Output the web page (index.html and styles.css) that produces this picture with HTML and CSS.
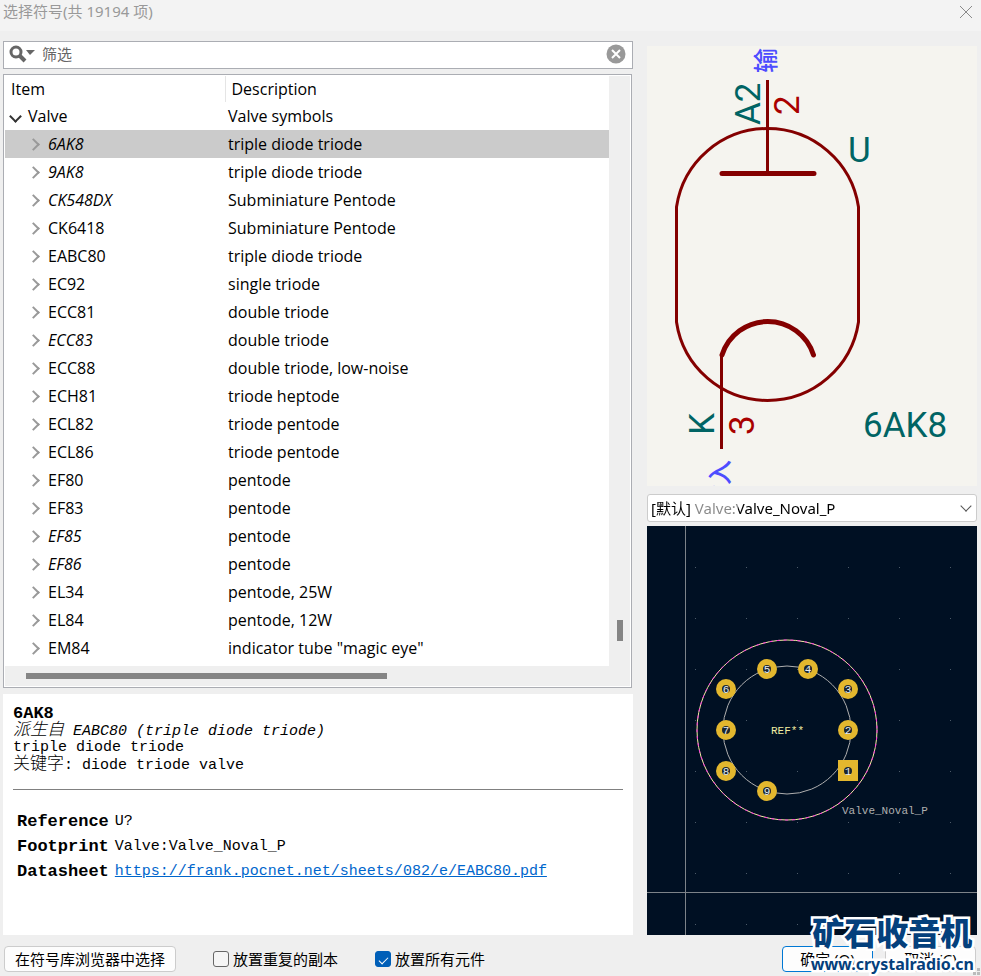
FILE: index.html
```html
<!DOCTYPE html>
<html lang="zh-CN">
<head>
    <meta charset="UTF-8">
    <meta name="viewport" content="width=device-width, initial-scale=1.0">
    <title>选择符号</title>
    <link rel="stylesheet" href="styles.css">
</head>
<body>
    <div class="titlebar">
        <h1>选择符号(共 19194 项)</h1>
        <button class="close" aria-label="关闭">
            <svg width="14" height="14" viewBox="0 0 14 14"><path d="M1 1 L13 13 M13 1 L1 13" stroke="#8a8a8a" fill="none"/></svg>
        </button>
    </div>
    <main class="content">
        <div class="left">
            <div class="search">
                <svg width="28" height="20" viewBox="0 0 28 20">
                    <circle cx="8" cy="8" r="5" fill="none" stroke="#666" stroke-width="3"/>
                    <path d="M11 11 L17 17" stroke="#666" stroke-width="4"/>
                    <path d="M18 6 H27 L22 11 Z" fill="#666"/>
                </svg>
                <input type="text" id="filter" placeholder="筛选" aria-label="筛选">
                <button class="clear" aria-label="清除">
                    <svg width="20" height="20" viewBox="0 0 20 20"><circle cx="10" cy="10" r="9.500" fill="#999"/><path d="M6 6 L14 14 M14 6 L6 14" stroke="#fff" stroke-width="2"/></svg>
                </button>
            </div>
            <div class="tree">
                <table>
                    <thead>
                        <tr><th class="name">Item</th><th>Description</th></tr>
                    </thead>
                    <tbody>
                        <tr class="library"><td><button class="expander open" aria-label="折叠"></button>Valve</td><td>Valve symbols</td></tr>
                        <tr class="selected derived"><td><button class="expander" aria-label="展开"></button>6AK8</td><td>triple diode triode</td></tr>
                        <tr class="derived"><td><button class="expander" aria-label="展开"></button>9AK8</td><td>triple diode triode</td></tr>
                        <tr class="derived"><td><button class="expander" aria-label="展开"></button>CK548DX</td><td>Subminiature Pentode</td></tr>
                        <tr><td><button class="expander" aria-label="展开"></button>CK6418</td><td>Subminiature Pentode</td></tr>
                        <tr><td><button class="expander" aria-label="展开"></button>EABC80</td><td>triple diode triode</td></tr>
                        <tr><td><button class="expander" aria-label="展开"></button>EC92</td><td>single triode</td></tr>
                        <tr><td><button class="expander" aria-label="展开"></button>ECC81</td><td>double triode</td></tr>
                        <tr class="derived"><td><button class="expander" aria-label="展开"></button>ECC83</td><td>double triode</td></tr>
                        <tr><td><button class="expander" aria-label="展开"></button>ECC88</td><td>double triode, low-noise</td></tr>
                        <tr><td><button class="expander" aria-label="展开"></button>ECH81</td><td>triode heptode</td></tr>
                        <tr><td><button class="expander" aria-label="展开"></button>ECL82</td><td>triode pentode</td></tr>
                        <tr><td><button class="expander" aria-label="展开"></button>ECL86</td><td>triode pentode</td></tr>
                        <tr><td><button class="expander" aria-label="展开"></button>EF80</td><td>pentode</td></tr>
                        <tr><td><button class="expander" aria-label="展开"></button>EF83</td><td>pentode</td></tr>
                        <tr class="derived"><td><button class="expander" aria-label="展开"></button>EF85</td><td>pentode</td></tr>
                        <tr class="derived"><td><button class="expander" aria-label="展开"></button>EF86</td><td>pentode</td></tr>
                        <tr><td><button class="expander" aria-label="展开"></button>EL34</td><td>pentode, 25W</td></tr>
                        <tr><td><button class="expander" aria-label="展开"></button>EL84</td><td>pentode, 12W</td></tr>
                        <tr><td><button class="expander" aria-label="展开"></button>EM84</td><td>indicator tube "magic eye"</td></tr>
                    </tbody>
                </table>
                <div class="vscroll"><div class="vthumb"></div></div>
                <div class="hscroll"><div class="hthumb"></div></div>
            </div>
            <section class="details">
                <h2>6AK8</h2>
                <p><em><span class="cjk">派生自</span> EABC80 (triple diode triode)</em></p>
                <p>triple diode triode</p>
                <p><span class="cjk">关键字</span>: diode triode valve</p>
                <hr>
                <table>
                    <tr><th>Reference</th><td>U?</td></tr>
                    <tr><th>Footprint</th><td>Valve:Valve_Noval_P</td></tr>
                    <tr><th>Datasheet</th><td><a href="https://frank.pocnet.net/sheets/082/e/EABC80.pdf">https://frank.pocnet.net/sheets/082/e/EABC80.pdf</a></td></tr>
                </table>
            </section>
        </div>
        <div class="right">
            <svg class="symbol" viewBox="0 0 330 440">
                <g class="outline">
                    <path d="M29.500 276 V161 A92 92 0 0 1 211.500 161 V276 A92 92 0 0 1 29.500 276 Z"/>
                    <path d="M120.500 34 V127 M74.500 309 V403"/>
                    <path class="thick" d="M75 127.500 H167 M75 309 A48 48 0 0 1 166.500 309"/>
                </g>
                <g class="label">
                    <text transform="translate(113 79) rotate(-90)">A2</text>
                    <text transform="translate(67 389) rotate(-90)">K</text>
                    <text x="201" y="116">U</text>
                    <text x="216" y="391">6AK8</text>
                </g>
                <g class="pin">
                    <text transform="translate(152 69) rotate(-90)">2</text>
                    <text transform="translate(107 389) rotate(-90)">3</text>
                </g>
                <g class="type">
                    <text transform="translate(128 27) rotate(-90)">输出</text>
                    <text transform="translate(82 464) rotate(-90)">输入</text>
                </g>
            </svg>
            <div class="select-box">
                <select class="footprint-select" id="footprint" aria-label="封装">
                    <option>[默认] Valve:Valve_Noval_P</option>
                </select>
            </div>
            <svg class="footprint" viewBox="0 0 330 409">
                <defs>
                    <pattern id="dots" x="48" y="41" width="51" height="51" patternUnits="userSpaceOnUse">
                        <rect width="1" height="1" fill="#4c5a68"/>
                    </pattern>
                </defs>
                <rect width="330" height="409" fill="url(#dots)"/>
                <path d="M38.500 0 V409 M0 366.500 H330" stroke="#7d8389"/>
                <circle cx="140" cy="204" r="64" class="fab"/>
                <circle cx="140" cy="204" r="90" class="silk"/>
                <circle cx="140" cy="204" r="90" class="courtyard"/>
                <g class="pads">
                    <circle cx="120" cy="143" r="10"/>
                    <circle cx="161" cy="143" r="10"/>
                    <circle cx="79" cy="163" r="10"/>
                    <circle cx="201" cy="163" r="10"/>
                    <circle cx="79" cy="204" r="10"/>
                    <circle cx="201" cy="204" r="10"/>
                    <circle cx="79" cy="245" r="10"/>
                    <rect x="191" y="234" width="20" height="21"/>
                    <circle cx="120" cy="265" r="10"/>
                </g>
                <g class="holes">
                    <circle cx="120" cy="143" r="4"/>
                    <circle cx="161" cy="143" r="4"/>
                    <circle cx="79" cy="163" r="4"/>
                    <circle cx="201" cy="163" r="4"/>
                    <circle cx="79" cy="204" r="4"/>
                    <circle cx="201" cy="204" r="4"/>
                    <circle cx="79" cy="245" r="4"/>
                    <circle cx="201" cy="245" r="4"/>
                    <circle cx="120" cy="265" r="4"/>
                </g>
                <g class="numbers">
                    <text x="120" y="147">5</text>
                    <text x="161" y="147">4</text>
                    <text x="79" y="167">6</text>
                    <text x="201" y="167">3</text>
                    <text x="79" y="208">7</text>
                    <text x="201" y="208">2</text>
                    <text x="79" y="249">8</text>
                    <text x="201" y="249">1</text>
                    <text x="120" y="269">9</text>
                </g>
                <text x="124" y="208" class="ref">REF**</text>
                <text x="195" y="288" class="value">Valve_Noval_P</text>
            </svg>
        </div>
    </main>
    <footer class="footer">
        <button class="btn browse">在符号库浏览器中选择</button>
        <label class="check"><input type="checkbox"><span>放置重复的副本</span></label>
        <label class="check"><input type="checkbox" checked><span>放置所有元件</span></label>
        <div class="actions">
            <button class="btn ok">确定 (O)</button>
            <button class="btn">取消 (C)</button>
        </div>
        <div class="watermark">
            <strong>矿石收音机</strong>
            <span>www.crystalradio.cn</span>
        </div>
        <svg class="grip" width="8" height="8" viewBox="0 0 8 8"><path d="M4 0 H7 V3 H4 Z M0 4 H3 V7 H0 Z M4 4 H7 V7 H4 Z" fill="#bbb"/></svg>
    </footer>
</body>
</html>
```

FILE: styles.css
```css
* {
    box-sizing: border-box;
}
body {
    margin: 0;
    min-height: 100vh;
    display: flex;
    flex-direction: column;
    background: #efefef;
    color: #000;
    font-family: "Noto Sans", "Noto Sans CJK SC", sans-serif;
    font-size: 15px;
}
button, input, select {
    font: inherit;
    color: inherit;
}
.titlebar {
    display: flex;
    justify-content: space-between;
    align-items: flex-start;
    height: 31px;
    padding: 0 8px 0 3px;
    background: #f3f3f3;
}
.titlebar h1 {
    margin: 0;
    font-size: 15px;
    font-weight: normal;
    line-height: 22px;
    color: #999;
}
.close, .clear {
    display: flex;
    padding: 0;
    border: none;
    background: none;
}
.close {
    margin-top: 5px;
}
.content {
    flex: 1;
    display: grid;
    grid-template-columns: minmax(0, 21fr) minmax(0, 11fr);
    column-gap: 14px;
    padding: 10px 4px 0 3px;
}
.left {
    display: flex;
    flex-direction: column;
}
.right {
    padding-top: 5px;
}

/* filter box */
.search {
    display: flex;
    align-items: center;
    height: 28px;
    padding: 0 6px 2px 4px;
    border: 1px solid #abadb3;
    background: #fff;
}
.search input {
    flex: 1;
    min-width: 0;
    padding: 0 6px;
    border: none;
    outline: none;
    background: none;
}
.search input::placeholder {
    color: #666;
}

/* symbol tree */
.tree {
    display: grid;
    grid-template-columns: minmax(0, 1fr) 21px;
    margin: 5px 1px 0 0;
    padding: 1px;
    border: 1px solid #abadb3;
    background: #fff;
    font-family: "Open Sans", sans-serif;
    font-size: 16px;
}
.tree table {
    width: 100%;
    border-collapse: collapse;
    table-layout: fixed;
    margin-bottom: 4px;
}
.tree th {
    height: 26px;
    padding: 0 6px;
    font-weight: normal;
    text-align: left;
}
.tree .name {
    width: 220px;
    border-right: 1px solid #e5e5e5;
}
.tree td {
    height: 28px;
    padding: 0 3px;
    white-space: nowrap;
}
.tree td:first-child {
    padding-left: 24px;
}
.tree .library td:first-child {
    padding-left: 4px;
}
.tree .derived td:first-child {
    font-style: italic;
}
.tree .selected {
    background: #cbcbcb;
}
.expander {
    width: 12px;
    height: 12px;
    margin-right: 7px;
    padding: 0;
    border: none;
    background: none;
}
.expander::before {
    content: "";
    display: block;
    width: 7px;
    height: 7px;
    border: solid #999;
    border-width: 2px 2px 0 0;
    transform: rotate(45deg);
}
.expander.open::before {
    border-color: #333;
    margin-left: 2px;
    transform: rotate(135deg);
}
.vscroll, .hscroll {
    background: #efefef;
}
.vscroll {
    display: flex;
    flex-direction: column;
    align-items: center;
    justify-content: flex-end;
    padding-bottom: 25px;
}
.vthumb {
    width: 6px;
    height: 21px;
    background: #858585;
}
.hscroll {
    grid-column: span 2;
    height: 20px;
    padding: 7px 21px;
}
.hthumb {
    width: 62%;
    height: 6px;
    background: #858585;
}

/* symbol details */
.details {
    flex: 1;
    margin-top: 6px;
    padding: 11px 10px;
    background: #fff;
    font-family: "Liberation Mono", "Noto Sans CJK SC", monospace;
    line-height: 17px;
}
.details h2 {
    margin: 0;
    font-size: 17px;
}
.details p {
    margin: 0;
    height: 17px;
}
.details .cjk {
    font-size: 17px;
    font-weight: 300;
}
.details hr {
    margin: 16px 0 19px;
    border: none;
    border-top: 1px solid #808080;
}
.details table {
    border-spacing: 0;
}
.details th, .details td {
    height: 25px;
    padding: 0 3px;
    text-align: left;
}
.details th {
    padding-left: 4px;
    font-size: 17px;
}
.details a {
    color: #0066cc;
}

/* previews */
.symbol, .footprint {
    display: block;
    width: 100%;
}
.symbol {
    background: #f5f4ef;
    font-family: Roboto, "Noto Sans CJK SC", sans-serif;
    font-size: 35px;
}
.outline {
    fill: none;
    stroke: #840000;
    stroke-width: 3;
}
.outline .thick {
    stroke-width: 5;
    stroke-linecap: round;
}
.label {
    fill: #006464;
}
.pin {
    fill: #a90000;
}
.type {
    fill: #4d4dff;
    font-size: 25px;
    font-weight: 500;
}
.select-box {
    position: relative;
    height: 28px;
    margin: 8px 0 4px;
    border: 1px solid #ccc;
    border-radius: 3px;
    background: #fff;
}
.select-box::after {
    content: "";
    position: absolute;
    top: 7px;
    right: 6px;
    width: 7px;
    height: 7px;
    border: solid #555;
    border-width: 0 1px 1px 0;
    transform: rotate(45deg);
    pointer-events: none;
}
/* the library prefix of the footprint name is greyed out */
.footprint-select {
    appearance: none;
    display: block;
    width: 100%;
    height: 26px;
    padding: 0 3px;
    border: none;
    background: linear-gradient(90deg, #000 45px, #888 45px, #888 90px, #000 90px);
    -webkit-background-clip: text;
    background-clip: text;
    color: transparent;
}
.footprint-select option {
    color: #000;
}
.footprint {
    background: #001023;
    font-family: "Liberation Mono", monospace;
    font-size: 11px;
}
.fab, .silk, .courtyard {
    fill: none;
    stroke: #afafaf;
}
.silk {
    stroke: #f2eda1;
}
.courtyard {
    stroke: #ff26e2;
    stroke-dasharray: 3 4;
}
.pads {
    fill: #e3b72e;
}
.holes {
    fill: #1a2530;
}
.numbers {
    fill: #e8ecef;
    text-anchor: middle;
}
.ref {
    fill: #f2eda1;
}
.value {
    fill: #afafaf;
}

/* bottom bar */
.footer {
    position: relative;
    display: flex;
    align-items: center;
    gap: 37px;
    height: 41px;
    padding: 7px 5px 0 4px;
}
.btn {
    height: 26px;
    width: 91px;
    padding: 0 0 2px;
    border: 1px solid #ccc;
    border-radius: 4px;
    background: #fdfdfd;
    white-space: nowrap;
}
.btn.browse {
    width: 172px;
}
.btn.ok {
    border-color: #0078d4;
}
.check {
    display: flex;
    align-items: center;
    gap: 4px;
}
.check span {
    padding-bottom: 2px;
}
.check input {
    appearance: none;
    width: 16px;
    height: 16px;
    margin: 0;
    border: 1px solid #666;
    border-radius: 3px;
    background: #f5f5f5;
}
.check input:checked {
    display: flex;
    align-items: center;
    justify-content: center;
    border-color: #005fb8;
    background: #005fb8;
}
.check input:checked::before {
    content: "";
    width: 8px;
    height: 4px;
    border: solid #fff;
    border-width: 0 0 1px 1px;
    transform: rotate(-45deg);
}
.actions {
    display: flex;
    gap: 12px;
    margin-left: auto;
}
.watermark {
    position: absolute;
    right: 7px;
    bottom: 0;
    display: flex;
    flex-direction: column;
    align-items: center;
    color: #04407c;
    pointer-events: none;
    -webkit-text-stroke: 5px #fff;
    paint-order: stroke fill;
}
.watermark strong {
    font-size: 32px;
    font-weight: 900;
    line-height: 38px;
}
.watermark span {
    font-size: 16px;
    font-weight: 700;
    line-height: 24px;
}
.grip {
    position: absolute;
    right: 0;
    bottom: 0;
}
```
